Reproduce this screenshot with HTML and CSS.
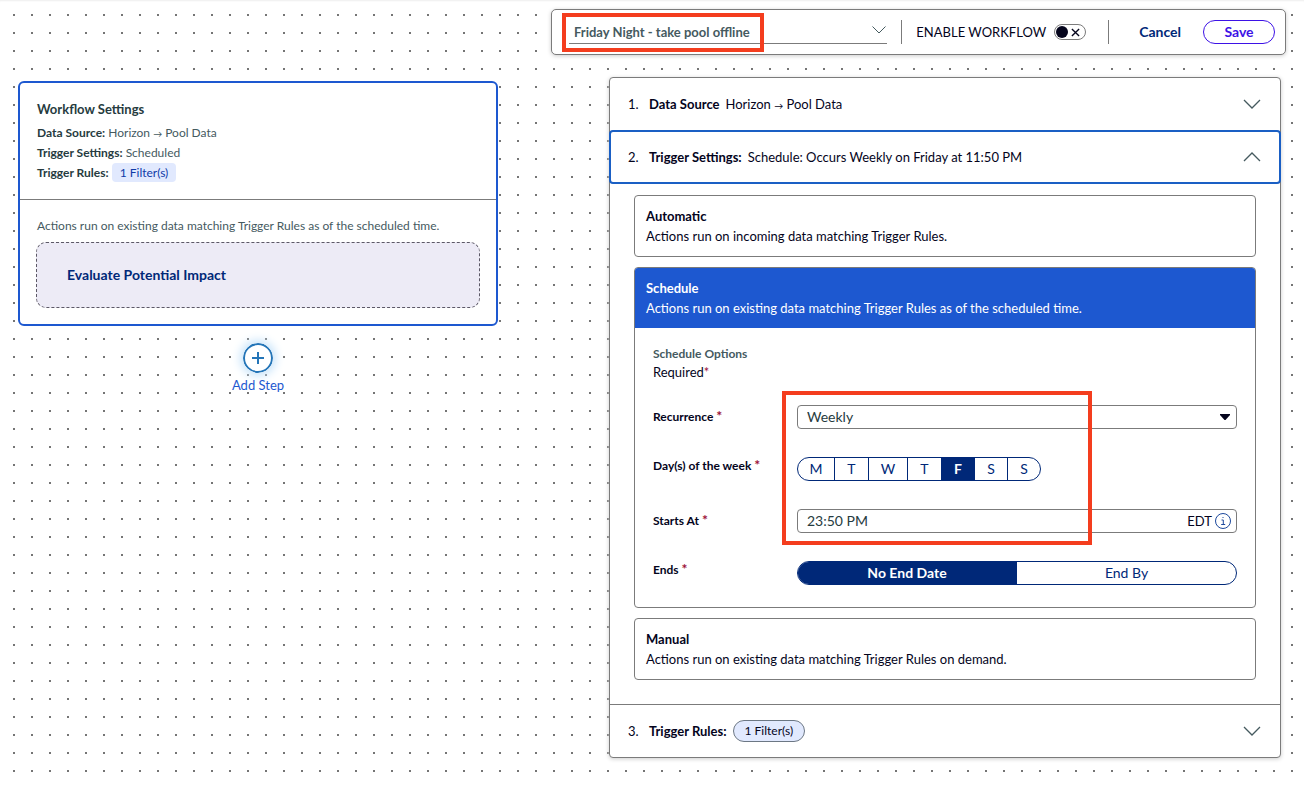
FILE: index.html
```html
<!DOCTYPE html>
<html lang="en">
<head>
<meta charset="utf-8">
<meta name="viewport" content="width=device-width, initial-scale=1">
<title>Workflow editor</title>
<link rel="stylesheet" href="styles.css">
</head>
<body>
<main class="canvas">
  <section class="flow" aria-label="Workflow">
    <article class="node">
      <div class="node-summary">
        <h2 class="node-title">Workflow Settings</h2>
        <p class="fact"><strong>Data Source:</strong> Horizon <span class="arrow">→</span> Pool Data</p>
        <p class="fact"><strong>Trigger Settings:</strong> Scheduled</p>
        <p class="fact"><strong>Trigger Rules:</strong> <span class="tag">1 Filter(s)</span></p>
      </div>
      <div class="node-impact">
        <p class="hint">Actions run on existing data matching Trigger Rules as of the scheduled time.</p>
        <button type="button" class="evaluate">Evaluate Potential Impact</button>
      </div>
    </article>
    <button type="button" class="add-step">
      <svg class="add-icon" viewBox="0 0 30 30" aria-hidden="true"><circle cx="15" cy="15" r="14"/><path d="M15 9v12M9 15h12"/></svg>
      <span>Add Step</span>
    </button>
  </section>

  <div class="editor">
    <header class="toolbar">
      <div class="name-field">
        <input type="text" class="name-input" aria-label="Workflow name" value="Friday Night - take pool offline">
        <svg class="name-chevron" viewBox="0 0 14 8" aria-hidden="true"><path d="M.5 .5 7 7 13.5 .5"/></svg>
        <span class="mark mark-name"></span>
      </div>
      <label class="enable">ENABLE WORKFLOW
        <span class="switch">
          <input type="checkbox" class="switch-input">
          <svg class="switch-x" viewBox="0 0 10 10" aria-hidden="true"><path d="M1 1l8 8M9 1 1 9"/></svg>
        </span>
      </label>
      <div class="actions">
        <button type="button" class="cancel">Cancel</button>
        <button type="button" class="save">Save</button>
      </div>
    </header>

    <section class="panel" aria-label="Workflow steps">
      <button type="button" class="step" aria-expanded="false">
        <span class="step-number">1.</span><strong>Data Source</strong><span>Horizon <span class="arrow">→</span> Pool Data</span>
        <svg class="chevron" viewBox="0 0 18 10" aria-hidden="true"><path d="M1 1l8 8 8-8"/></svg>
      </button>
      <button type="button" class="step step-open" aria-expanded="true">
        <span class="step-number">2.</span><strong>Trigger Settings:</strong><span>Schedule: Occurs Weekly on Friday at 11:50 PM</span>
        <svg class="chevron" viewBox="0 0 18 10" aria-hidden="true"><path d="M1 9l8-8 8 8"/></svg>
      </button>

      <div class="step-body">
        <button type="button" class="option">
          <strong>Automatic</strong>
          <span>Actions run on incoming data matching Trigger Rules.</span>
        </button>
        <div class="schedule">
          <button type="button" class="option option-active">
            <strong>Schedule</strong>
            <span>Actions run on existing data matching Trigger Rules as of the scheduled time.</span>
          </button>
          <form class="schedule-form">
            <div class="form-intro">
              <h3 class="form-title">Schedule Options</h3>
              <p class="required">Required<span class="star">*</span></p>
            </div>
            <div class="fields">
              <label class="label" for="recurrence">Recurrence <span class="star">*</span></label>
              <div class="control select-box">
                <select id="recurrence" class="select"><option>Weekly</option></select>
                <svg class="caret" viewBox="0 0 10 6" aria-hidden="true"><path d="M0 0h10v1L5.500 6h-1L0 1z"/></svg>
                <span class="mark mark-fields"></span>
              </div>

              <span class="label label-top" id="days-label">Day(s) of the week <span class="star">*</span></span>
              <div class="segments days" role="group" aria-labelledby="days-label">
                <button type="button" class="segment">M</button>
                <button type="button" class="segment">T</button>
                <button type="button" class="segment">W</button>
                <button type="button" class="segment">T</button>
                <button type="button" class="segment selected" aria-pressed="true">F</button>
                <button type="button" class="segment">S</button>
                <button type="button" class="segment">S</button>
              </div>

              <label class="label" for="starts">Starts At <span class="star">*</span></label>
              <div class="control">
                <input type="text" id="starts" class="time" value="23:50 PM">
                <span class="zone">EDT</span>
                <svg class="info" viewBox="0 0 16 16" aria-hidden="true"><circle cx="8" cy="8" r="7.500"/><path d="M6.500 7H8.300v4.500M6.200 11.500h4M7.500 4.500h1"/></svg>
              </div>

              <span class="label label-top" id="ends-label">Ends <span class="star">*</span></span>
              <div class="segments ends" role="group" aria-labelledby="ends-label">
                <button type="button" class="segment selected" aria-pressed="true">No End Date</button>
                <button type="button" class="segment">End By</button>
              </div>
            </div>
          </form>
        </div>
        <button type="button" class="option">
          <strong>Manual</strong>
          <span>Actions run on existing data matching Trigger Rules on demand.</span>
        </button>
      </div>

      <button type="button" class="step step-last" aria-expanded="false">
        <span class="step-number">3.</span><strong>Trigger Rules:</strong><span class="pill">1 Filter(s)</span>
        <svg class="chevron" viewBox="0 0 18 10" aria-hidden="true"><path d="M1 1l8 8 8-8"/></svg>
      </button>
    </section>
  </div>
</main>
</body>
</html>
```
FILE: styles.css
```css
:root {
  --ink: #04041c;
  --slate: #455a5f;
  --slate-dark: #263b40;
  --navy: #002878;
  --blue: #1d58d0;
  --line: #7b7b7b;
  --red: #f43d1e;
}

* { box-sizing: border-box; }

body {
  margin: 0;
  font-family: Lato, "Liberation Sans", sans-serif;
  font-size: 13px;
  line-height: 20px;
  color: var(--ink);
  background: #fff;
}

h2, h3, p { margin: 0; }

button, input, select {
  margin: 0;
  padding: 0;
  border: 0;
  background: none;
  font: inherit;
  color: inherit;
}

svg { display: block; fill: none; stroke: currentColor; flex: none; }

.arrow { font-size: 9px; line-height: 1; }

.canvas {
  display: flex;
  justify-content: space-between;
  align-items: flex-start;
  gap: 48px;
  min-height: 100vh;
  padding: 9px 18px 24px;
  background: conic-gradient(from 270deg at 2px 2px, #757575 90deg, transparent 0) 13px 14px / 18px 18px;
  box-shadow: inset 0 2px 2px -1px #eee;
}

/* Workflow nodes */
.flow {
  flex: 0 1 480px;
  display: flex;
  flex-direction: column;
  align-items: center;
  gap: 17px;
  padding-top: 72px;
}

.node {
  width: 100%;
  border: 2px solid var(--blue);
  border-radius: 6px;
  background: #fff;
  color: var(--slate);
  font-size: 12px;
}

.node-summary { padding: 16px 17px; border-bottom: 1px solid var(--line); }
.node-title { margin-bottom: 4px; font-size: 13px; font-weight: 700; color: var(--slate-dark); }
.fact strong { color: var(--slate-dark); }

.tag {
  display: inline-block;
  padding: 0 8px;
  border-radius: 4px;
  background: #e1e9fe;
  color: #0f3ba8;
  line-height: 19px;
}

.node-impact { padding: 16px; }
.hint { padding: 0 1px; margin-bottom: 6px; }

.evaluate {
  display: block;
  width: 100%;
  height: 66px;
  padding: 0 30px;
  border: 1px dashed #5c5866;
  border-radius: 10px;
  background: #edebf6;
  color: var(--navy);
  font-size: 14px;
  font-weight: 700;
  text-align: left;
}

.add-step {
  display: flex;
  flex-direction: column;
  align-items: center;
  gap: 2px;
  color: var(--blue);
}

.add-icon {
  width: 30px;
  height: 30px;
  border-radius: 50%;
  background: #fff;
  box-shadow: 0 0 10px 3px #c8e4fa;
  color: #2475b8;
  stroke-width: 2;
}

/* Editor toolbar */
.editor { flex: 0 1 735px; }

.toolbar {
  display: flex;
  align-items: center;
  height: 46px;
  padding: 0 10px 0 17px;
  border: 1px solid var(--line);
  border-radius: 5px;
  background: #fff;
  box-shadow: 0 1px 4px #ccc;
}

.name-field {
  position: relative;
  flex: 1;
  display: flex;
  align-items: center;
  height: 24px;
  padding: 0 1px 0 5px;
  margin-right: 14px;
  border-bottom: 1px solid var(--line);
}

.name-input { flex: 1; min-width: 0; font-weight: 700; color: var(--slate); }
.name-chevron { width: 14px; height: 8px; margin-bottom: 4px; color: var(--slate); }

.mark { position: absolute; border: 4px solid var(--red); pointer-events: none; }
.mark-name { left: -7px; top: -7px; width: 202px; height: 39px; }
.mark-fields { left: -16px; top: -15px; width: 310px; height: 154px; }

.enable, .actions { display: flex; align-items: center; height: 24px; border-left: 1px solid var(--line); }
.enable { gap: 8px; padding: 0 22px 0 14px; }

.switch {
  display: flex;
  align-items: center;
  justify-content: space-between;
  width: 32px;
  height: 16px;
  padding: 0 5px 0 1px;
  border: 1px solid var(--line);
  border-radius: 8px;
}

.switch-input { appearance: none; width: 12px; height: 12px; border-radius: 50%; background: var(--ink); }
.switch-x { width: 9px; height: 9px; stroke-width: 1.5; }

.actions { gap: 22px; padding-left: 30px; font-size: 14px; font-weight: 700; }
.cancel { color: var(--navy); }
.save { width: 72px; height: 24px; border: 1px solid #3d12e6; border-radius: 12px; color: #3d12e6; }

/* Step panel */
.panel {
  width: 672px;
  max-width: 100%;
  margin: 22px 5px 0 auto;
  border: 1px solid var(--line);
  border-radius: 4px;
  background: #fff;
  box-shadow: 0 1px 4px #ccc;
}

.step {
  display: flex;
  align-items: center;
  gap: 6px;
  width: 100%;
  height: 52px;
  padding: 0 19px 0 18px;
  text-align: left;
}

.step-number { width: 15px; }
.chevron { width: 18px; height: 10px; margin-left: auto; color: var(--slate); stroke-width: 1.3; }

.step-open {
  width: calc(100% + 2px);
  height: 54px;
  margin: 0 -1px;
  padding: 0 18px 0 17px;
  border: 2px solid #1a5fc4;
  border-radius: 4px;
}

.step-last { border-top: 1px solid var(--line); height: 53px; }

.pill {
  padding: 0 11px;
  border: 1px solid #6c7784;
  border-radius: 11px;
  background: #e1e9fe;
  font-size: 12px;
}

.step-body { display: grid; gap: 10px; padding: 11px 24px 24px; }

.option {
  display: flex;
  flex-direction: column;
  width: 100%;
  padding: 10px 11px;
  border: 1px solid var(--line);
  border-radius: 4px;
  text-align: left;
}

.schedule { border: 1px solid var(--line); border-radius: 4px; }
.option-active { padding: 10px 11px; border: 0; border-radius: 3px 3px 0 0; background: var(--blue); color: #fff; }

.schedule-form { padding: 17px 18px 22px; }
.form-intro { line-height: 18px; margin-bottom: 24px; }
.form-title { font-size: 12px; font-weight: 700; color: var(--slate); }
.star { color: #9c1238; }

.fields { display: grid; grid-template-columns: 144px 1fr; gap: 28px 0; align-items: center; }
.label { font-size: 12px; font-weight: 700; }
.label-top { align-self: start; line-height: 18px; }
.label .star { font-size: 14px; line-height: 1; }

.control {
  display: flex;
  align-items: center;
  gap: 3px;
  height: 24px;
  padding: 0 5px 0 9px;
  border: 1px solid var(--line);
  border-radius: 4px;
}

.select-box { position: relative; padding-right: 6px; }
.select { flex: 1; appearance: none; font-size: 14px; color: var(--slate-dark); }
.caret { width: 10px; height: 6px; fill: currentColor; stroke: none; }
.time { flex: 1; min-width: 0; font-size: 14px; color: var(--slate-dark); }
.info { width: 16px; height: 16px; color: #1c489c; }

.segments { display: grid; height: 24px; border: 1px solid var(--navy); border-radius: 12px; overflow: hidden; }
.days { grid-template-columns: 37px 34px 39px 34px 33px 33px 32px; justify-self: start; }
.ends { grid-template-columns: 1fr 1fr; }
.segment { border-right: 1px solid var(--navy); color: var(--navy); font-size: 14px; }
.segment:last-child { border-right: 0; }
.selected { background: var(--navy); color: #fff; font-weight: 700; }
```
